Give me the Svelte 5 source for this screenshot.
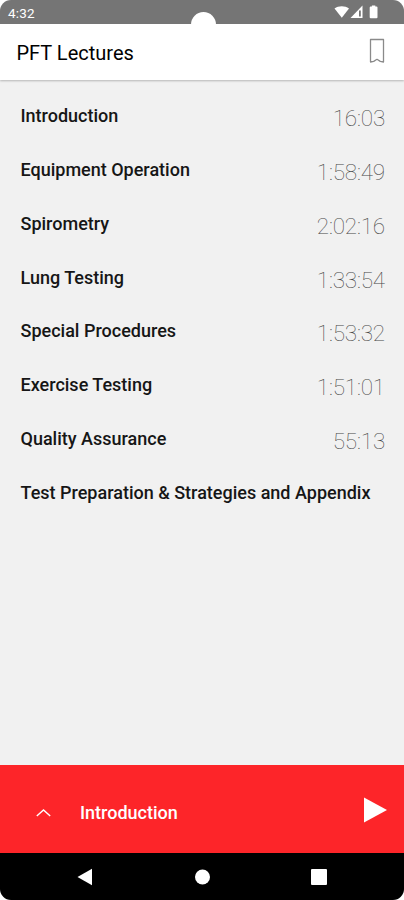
<script>
    const lectures = [
        { title: "Introduction", time: "16:03" },
        { title: "Equipment Operation", time: "1:58:49" },
        { title: "Spirometry", time: "2:02:16" },
        { title: "Lung Testing", time: "1:33:54" },
        { title: "Special Procedures", time: "1:53:32" },
        { title: "Exercise Testing", time: "1:51:01" },
        { title: "Quality Assurance", time: "55:13" },
        { title: "Test Preparation & Strategies and Appendix", time: "" }
    ];

    let current = $state(lectures[0]);
</script>

<div class="phone">
    <div class="status">
        <span class="clock">4:32</span>
        <svg class="signals" width="46" height="14" viewBox="0 0 46 14" fill="#fff">
            <path d="M.5 3.600C4.500.6 11 .6 15 3.600L7.800 12.800z" />
            <path d="M28.500 .6V13H16.500z" />
            <path d="M25 5.500h1.800v6H25z" fill="#757575" />
            <path d="M37.900 .4h3.400v1.200h1.200q1 0 1 1V12.200q0 1-1 1h-5.800q-1 0-1-1V2.600q0-1 1-1h1.200z" />
        </svg>
        <span class="camera"></span>
    </div>

    <header>
        <h1>PFT Lectures</h1>
        <svg class="bookmark" width="16" height="26" viewBox="0 0 16 26" fill="none" stroke="#8a8a8a" stroke-width="1.3">
            <path d="M1.500 1.500h13v22.500l-3.200-.6L8 21.300l-3.300 2.100-3.200.6z" stroke-linejoin="round" />
        </svg>
    </header>

    <ul>
        {#each lectures as lecture (lecture.title)}
            <li>
                <button onclick={() => (current = lecture)}>
                    <span class="title">{lecture.title}</span>
                    <span class="time">{lecture.time}</span>
                </button>
            </li>
        {/each}
    </ul>

    <div class="player">
        <svg class="chevron" width="16" height="9" viewBox="0 0 16 9" fill="none" stroke="#fff" stroke-width="1.4">
            <path d="M.8 8l6.700-6L14.200 8" />
        </svg>
        <span class="playing">{current.title}</span>
        <svg class="play" width="23" height="26" viewBox="0 0 23 26" fill="#fff">
            <path d="M0 .5L23 13 0 25.500z" />
        </svg>
    </div>

    <nav>
        <svg width="16" height="18" viewBox="0 0 16 18" fill="#fff"><path d="M15 .8v16.400L.5 9z" /></svg>
        <svg width="16" height="16" viewBox="0 0 16 16" fill="#fff"><circle cx="8.500" cy="8" r="7.500" /></svg>
        <svg width="16" height="16" viewBox="0 0 16 16" fill="#fff"><rect width="16" height="16" rx="1" /></svg>
    </nav>
</div>

<style>
    :global(body) {
        margin: 0;
        background: #fff;
    }

    .phone {
        display: flex;
        flex-direction: column;
        width: 404px;
        height: 900px;
        overflow: hidden;
        border-radius: 11px;
        background: #f1f1f1;
        font-family: Roboto, sans-serif;
    }

    .status {
        position: relative;
        display: flex;
        justify-content: space-between;
        box-sizing: border-box;
        height: 23.5px;
        padding: 5px 24px 0 8px;
        background: #757575;
        color: #fff;
    }

    .clock {
        font-size: 13.5px;
        line-height: 16px;
        letter-spacing: 0.2px;
    }

    /* front camera cutout, reaches into the header */
    .camera {
        position: absolute;
        top: 12px;
        left: 190.5px;
        width: 25px;
        height: 25px;
        border-radius: 50%;
        background: #fff;
    }

    header {
        display: flex;
        align-items: center;
        justify-content: space-between;
        box-sizing: border-box;
        height: 56.5px;
        padding: 0 19px 0 16.5px;
        background: #fff;
        box-shadow: 0 1px 2px rgba(0, 0, 0, 0.25);
    }

    h1 {
        margin: 2px 0 0;
        font-size: 20px;
        font-weight: 400;
        color: #000;
    }

    .bookmark {
        margin-bottom: 2px;
    }

    ul {
        flex: 1;
        margin: 0;
        padding: 8.6px 0 0;
        list-style: none;
    }

    button {
        display: flex;
        justify-content: space-between;
        width: 100%;
        height: 53.85px;
        padding: 16.5px 19px 0 20.5px;
        border: 0;
        background: none;
        font-family: inherit;
        text-align: left;
        white-space: nowrap;
    }

    .title {
        font-size: 18px;
        font-weight: 500;
        line-height: 22px;
        color: #161616;
    }

    .time {
        font-size: 22.5px;
        font-weight: 100;
        line-height: 26px;
        letter-spacing: -0.2px;
        color: #484848;
    }

    .player {
        display: flex;
        align-items: center;
        box-sizing: border-box;
        height: 88px;
        padding: 6px 17px 0 36px;
        background: #fd2529;
        color: #fff;
    }

    .playing {
        flex: 1;
        margin-left: 28px;
        font-size: 18px;
        font-weight: 500;
    }

    .play {
        margin-bottom: 5px;
    }

    nav {
        display: flex;
        align-items: center;
        justify-content: space-between;
        box-sizing: border-box;
        height: 47px;
        padding: 0 77px;
        background: #000;
    }
</style>
